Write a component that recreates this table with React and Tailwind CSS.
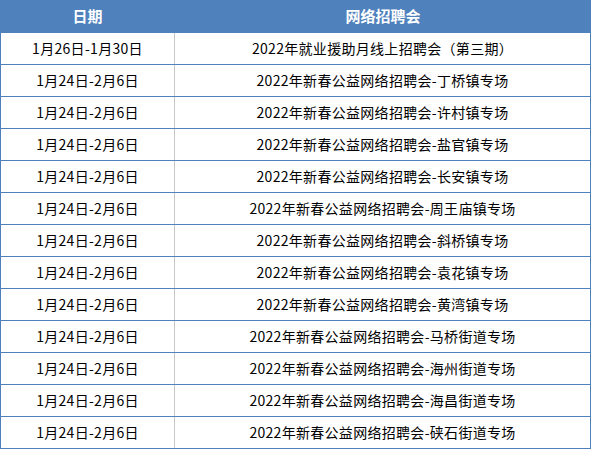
const rows = [
  ['1月26日-1月30日', '2022年就业援助月线上招聘会（第三期）'],
  ['1月24日-2月6日', '2022年新春公益网络招聘会-丁桥镇专场'],
  ['1月24日-2月6日', '2022年新春公益网络招聘会-许村镇专场'],
  ['1月24日-2月6日', '2022年新春公益网络招聘会-盐官镇专场'],
  ['1月24日-2月6日', '2022年新春公益网络招聘会-长安镇专场'],
  ['1月24日-2月6日', '2022年新春公益网络招聘会-周王庙镇专场'],
  ['1月24日-2月6日', '2022年新春公益网络招聘会-斜桥镇专场'],
  ['1月24日-2月6日', '2022年新春公益网络招聘会-袁花镇专场'],
  ['1月24日-2月6日', '2022年新春公益网络招聘会-黄湾镇专场'],
  ['1月24日-2月6日', '2022年新春公益网络招聘会-马桥街道专场'],
  ['1月24日-2月6日', '2022年新春公益网络招聘会-海州街道专场'],
  ['1月24日-2月6日', '2022年新春公益网络招聘会-海昌街道专场'],
  ['1月24日-2月6日', '2022年新春公益网络招聘会-硖石街道专场'],
]

export default function App() {
  return (
    <div className="w-[591px] bg-white text-black font-['Noto_Sans_CJK_SC',sans-serif]">
      {/* 表头 */}
      <div className="flex h-[33px] bg-[#4f81bd] text-white font-bold text-[15px]">
        <div className="w-[175px] flex items-center justify-center">日期</div>
        <div className="flex-1 flex items-center justify-center">网络招聘会</div>
      </div>
      {rows.map(([date, name], i) => (
        <div
          key={i}
          className="flex h-[32px] border-x border-b border-[#4f81bd] text-[14px] tracking-[0.3px]"
        >
          <div className="w-[174px] flex items-center justify-center border-r border-[#c8c8c8]">
            {date}
          </div>
          <div className="flex-1 flex items-center justify-center">{name}</div>
        </div>
      ))}
    </div>
  )
}
